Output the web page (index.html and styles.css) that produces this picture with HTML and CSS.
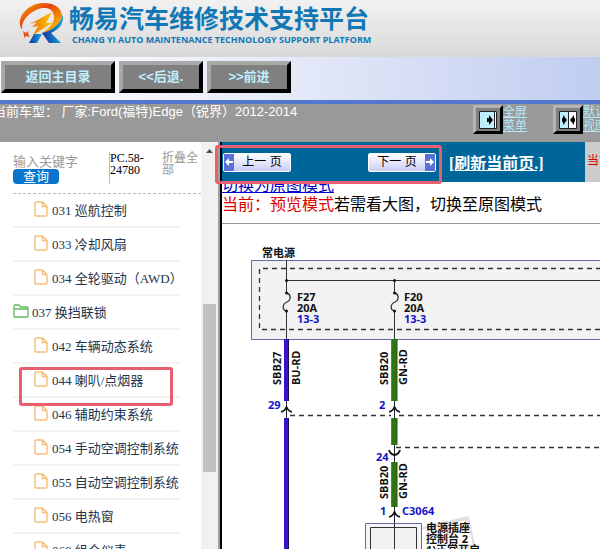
FILE: index.html
```html
<!DOCTYPE html>
<html lang="zh">
<head>
  <meta charset="UTF-8" />
  <title>畅易汽车维修技术支持平台</title>
  <meta name="viewport" content="width=device-width, initial-scale=1" />
  <link rel="stylesheet" href="styles.css">
</head>

<body>
  <header class="banner">
    <svg class="logo" viewBox="0 0 46 42" width="46" height="42" aria-hidden="true">
      <defs>
        <linearGradient id="fire" x1="0" y1="0" x2="1" y2="1">
          <stop offset="0" stop-color="#f9b800" />
          <stop offset="0.4" stop-color="#e8400c" />
          <stop offset="0.75" stop-color="#f7a000" />
          <stop offset="1" stop-color="#ffd800" />
        </linearGradient>
        <linearGradient id="bolt" x1="0" y1="0" x2="1" y2="0">
          <stop offset="0" stop-color="#f07010" />
          <stop offset="1" stop-color="#ffc400" />
        </linearGradient>
        <linearGradient id="sea" x1="0" y1="0" x2="1" y2="0">
          <stop offset="0" stop-color="#12349b" />
          <stop offset="1" stop-color="#1ba4e6" />
        </linearGradient>
      </defs>
      <path d="M4 28C-3 17 8 3 23 1C38 0 46 8 44 18C42 25 36 29 29 31L24 31C32 26 37 20 36 14C35 6 27 4 18 8C8 13 3 21 4 28Z" fill="url(#fire)" />
      <path d="M45 13C46 23 40 28 33 31L43 41L31 41L24 31C33 29 42 23 45 13Z" fill="url(#sea)" />
      <path d="M16 32L24 32L19 41L11 41Z" fill="url(#sea)" />
      <path d="M12 22L34 10L28 21L34 21L15 33L20 24L14 25L19 20Z" fill="url(#bolt)" />
      <path d="M5 29L8 31L11 29L10 32L12 35L8 34L6 36L6 33Z" fill="#e8501a" />
    </svg>
    <div class="brand">
      <h1 class="brand-name">畅易汽车维修技术支持平台</h1>
      <p class="brand-en">CHANG YI AUTO MAINTENANCE TECHNOLOGY SUPPORT PLATFORM</p>
    </div>
  </header>

  <nav class="toolbar">
    <button class="nav-btn wide">返回主目录</button>
    <button class="nav-btn">&lt;&lt;后退.</button>
    <button class="nav-btn">&gt;&gt;前进</button>
  </nav>

  <div class="infobar">
    <p class="car">当前车型： 厂家:Ford(福特)Edge（锐界）2012-2014</p>
    <div class="view-tools">
      <div class="view-tool">
        <button class="view-btn" aria-label="全屏菜单">
          <svg viewBox="0 0 18 18" width="18" height="18">
            <path d="M0.5 0.5H17.5V17.5H0.5Z" fill="#bfeeff" stroke="#222" />
            <path d="M15 1H17V17H15Z" fill="#fff" />
            <path d="M15.5 1V17" stroke="#222" />
            <path d="M8 7H10V4L14 9L10 14V11H8Z" fill="#000" />
          </svg>
        </button>
        <a class="view-link" href="#">全屏菜单</a>
      </div>
      <div class="view-tool">
        <button class="view-btn" aria-label="默认视图">
          <svg viewBox="0 0 18 18" width="18" height="18">
            <path d="M0.5 0.5H17.5V17.5H0.5Z" fill="#bfeeff" stroke="#222" />
            <path d="M9 1H17V17H9Z" fill="#fff" />
            <path d="M9.5 1V17" stroke="#222" />
            <path d="M3 7H4V4L8 9L4 14V11H3ZM16 7H15V4L11 9L15 14V11H16Z" fill="#000" />
          </svg>
        </button>
        <a class="view-link" href="#">默认视图</a>
      </div>
    </div>
  </div>

  <div class="frames">
    <aside class="sidebar">
      <div class="search">
        <div class="search-form">
          <input class="search-input" type="text" placeholder="输入关键字" aria-label="输入关键字" />
          <button class="search-btn">查询</button>
        </div>
        <div class="code">PC.58-24780</div>
        <a class="fold" href="#">折叠全部</a>
      </div>

      <svg class="symbols" width="0" height="0" aria-hidden="true">
        <symbol id="file" viewBox="0 0 14 16">
          <path d="M2 1H8.500L13 5.500V14Q13 15 12 15H2Q1 15 1 14V2Q1 1 2 1ZM8.500 1V5.500H13" fill="none" stroke="#f7bd7c" stroke-width="1.400" />
        </symbol>
        <symbol id="folder" viewBox="0 0 16 14">
          <path d="M1 12V2Q1 1 2 1H6L7.500 3H14Q15 3 15 4V12Q15 13 14 13H2Q1 13 1 12ZM1 5H15" fill="none" stroke="#62b95c" stroke-width="1.300" />
        </symbol>
      </svg>

      <ul class="tree">
        <li class="node"><svg class="file"><use href="#file" /></svg><a href="#">031 巡航控制</a></li>
        <li class="node"><svg class="file"><use href="#file" /></svg><a href="#">033 冷却风扇</a></li>
        <li class="node"><svg class="file"><use href="#file" /></svg><a href="#">034 全轮驱动（AWD）</a></li>
        <li class="node parent"><svg class="folder"><use href="#folder" /></svg><a href="#">037 换挡联锁</a></li>
        <li class="node"><svg class="file"><use href="#file" /></svg><a href="#">042 车辆动态系统</a></li>
        <li class="node"><svg class="file"><use href="#file" /></svg><a href="#">044 喇叭/点烟器</a><span class="mark mark-node"></span></li>
        <li class="node"><svg class="file"><use href="#file" /></svg><a href="#">046 辅助约束系统</a></li>
        <li class="node"><svg class="file"><use href="#file" /></svg><a href="#">054 手动空调控制系统</a></li>
        <li class="node"><svg class="file"><use href="#file" /></svg><a href="#">055 自动空调控制系统</a></li>
        <li class="node"><svg class="file"><use href="#file" /></svg><a href="#">056 电热窗</a></li>
        <li class="node"><svg class="file"><use href="#file" /></svg><a href="#">060 组合仪表</a></li>
      </ul>
    </aside>

    <div class="scrollbar">
      <svg class="scroll-up" viewBox="0 0 7 4" width="7" height="4"><path d="M3.500 0L7 4H0Z" fill="#505050" /></svg>
      <div class="scroll-thumb"></div>
    </div>

    <main class="content">
      <div class="pager">
        <div class="pager-main">
          <div class="pager-btns">
            <button class="page-btn"><span class="arrow"><svg viewBox="0 0 8 8" width="8" height="8"><path d="M0 4L4 0V3H8V5H4V8Z" fill="#fff" /></svg></span><span class="page-text">上一 页</span></button>
            <button class="page-btn"><span class="page-text">下一 页</span><span class="arrow"><svg viewBox="0 0 8 8" width="8" height="8"><path d="M8 4L4 0V3H0V5H4V8Z" fill="#fff" /></svg></span></button>
            <span class="mark mark-pager"></span>
          </div>
          <a class="refresh" href="#">[刷新当前页.]</a>
        </div>
        <div class="pager-side">当前</div>
      </div>

      <div class="mode">
        <a class="mode-link" href="#">切换为原图模式</a>
        <p class="mode-text"><span class="red">当前：预览模式</span>若需看大图，切换至原图模式</p>
      </div>

      <!-- 电路图 -->
      <svg class="diagram" viewBox="222 224 378 325" preserveAspectRatio="xMinYMin slice">
        <g fill="none" stroke="#dedede" stroke-width="2">
          <path d="M416 530L468 517L474 545L423 558Z" />
          <path d="M446 524L466 519L468 529L449 534Z" />
        </g>

        <path d="M610 260.500H251.500V339.500H610" fill="#f2f2f2" stroke="#6868ad" />
        <path d="M610 268.500H259.500V329.500H610" fill="none" stroke="#333" stroke-width="1.300" stroke-dasharray="5 4" />

        <g fill="none" stroke="#333">
          <path d="M286.500 260V293M286.500 311V339M394.500 280V293M394.500 311V339M286 280.500H610" />
          <path d="M286.500 293C291 294 291.500 300 287 302C282 304 282 310 286.500 311M394.500 293C399 294 399.500 300 395 302C390 304 390 310 394.500 311" stroke-width="1.300" />
          <path d="M290 415.500H391M399 415.500H610M396 447.500H610" stroke-dasharray="5 4" stroke-width="1.300" />
        </g>
        <g fill="#111">
          <circle cx="286.500" cy="280.500" r="1.500" /><circle cx="394.500" cy="280.500" r="1.500" />
          <circle cx="286.500" cy="293" r="1.500" /><circle cx="394.500" cy="293" r="1.500" />
          <circle cx="286.500" cy="311" r="1.500" /><circle cx="394.500" cy="311" r="1.500" />
        </g>

        <!-- 导线 -->
        <path d="M286.500 400V420M394.500 400V420M394.500 443V463M394.500 505V524" stroke="#223" />
        <path d="M284 339H289V401H284ZM284 418H289V570H284Z" fill="#3a12cc" />
        <path d="M288.500 339V401M288.500 418V570" stroke="#15104a" />
        <path d="M392 339H397V401H392ZM392 418H397V445H392ZM392 462H397V507H392Z" fill="#2f7412" />
        <path d="M391.500 339V401M391.500 418V445M391.500 462V507" stroke="#8a6a4a" />
        <path d="M397 339V401M397 418V445M397 462V507" stroke="#24520e" />
        <g fill="none" stroke="#111" stroke-width="1.800">
          <path d="M281 412Q285 411 286.500 407Q288 411 292 412" />
          <path d="M389 412Q393 411 394.500 407Q396 411 400 412" />
          <path d="M389 450Q390 454 394.500 455Q399 454 400 450" />
          <path d="M389 517Q393 516 394.500 512Q396 516 400 517" />
        </g>

        <path d="M365.500 523.500H421.500V570H365.500Z" fill="#f4f4fa" stroke="#6868ad" />
        <path d="M370.500 527.500H416.500V570H370.500Z" fill="#f2f2f2" stroke="#333" />
        <path d="M394.500 523V570" stroke="#333" />

        <g class="label">
          <text x="262" y="257">常电源</text>
          <text x="297" y="301">F27</text><text x="297" y="312">20A</text>
          <text x="404" y="301">F20</text><text x="404" y="312">20A</text>
          <text transform="translate(281 385) rotate(-90)">SBB27</text>
          <text transform="translate(300 385) rotate(-90)">BU-RD</text>
          <text transform="translate(388 385) rotate(-90)">SBB20</text>
          <text transform="translate(407 385) rotate(-90)">GN-RD</text>
          <text transform="translate(388 499) rotate(-90)">SBB20</text>
          <text transform="translate(407 499) rotate(-90)">GN-RD</text>
          <text x="426" y="532">电源插座</text>
          <text x="426" y="543">控制台 2</text>
          <text x="426" y="554">1)正常开启</text>
        </g>
        <g class="label pin">
          <text x="297" y="323">13-3</text><text x="404" y="323">13-3</text>
          <text x="268" y="409">29</text><text x="379" y="409">2</text>
          <text x="376" y="461">24</text><text x="380" y="515">1</text>
          <text x="402" y="515">C3064</text>
        </g>
      </svg>
    </main>
  </div>
</body>
</html>
```

FILE: styles.css
```css
* { box-sizing: border-box; }
body {
  margin: 0;
  height: 100vh;
  overflow: hidden;
  display: flex;
  flex-direction: column;
  background: #fff;
  font-family: "Liberation Sans", "Noto Sans CJK SC", sans-serif;
  font-size: 13px;
}
h1, p, ul { margin: 0; padding: 0; }
button { margin: 0; padding: 0; font-family: inherit; cursor: pointer; }

/* 顶部 */
.banner {
  display: flex;
  flex: none;
  gap: 5px;
  height: 57px;
  padding: 2px 0 0 18px;
  background: linear-gradient(#f1f1f1, #d9d9d9);
}
.brand { white-space: nowrap; color: #1278b5; }
.brand-name { font-size: 25px; line-height: 34px; font-weight: bold; }
.brand-en { padding-left: 3px; font-family: "Open Sans", sans-serif; font-size: 9px; line-height: 8px; font-weight: bold; }

.toolbar {
  display: flex;
  flex: none;
  gap: 4px;
  height: 47px;
  padding: 4px 1px;
  border-bottom: 4px solid #5277cd;
  background: linear-gradient(90deg, #fff, #e4e9f8 50%, #c0cdf0);
}
.nav-btn {
  width: 84px;
  height: 32px;
  border: 4px solid;
  border-color: #a8a8a8 #000 #000 #a8a8a8;
  background: #808080;
  color: #bfefff;
  font-size: 13px;
  line-height: 20px;
  font-weight: bold;
}
.nav-btn.wide { width: 114px; }

.infobar {
  display: flex;
  flex: none;
  justify-content: space-between;
  height: 38px;
  background: #999;
  color: #fff;
  overflow: hidden;
}
.car { margin-left: -7px; line-height: 16px; white-space: pre; }
.view-tools { display: flex; gap: 26px; padding-top: 1px; margin-right: -7px; }
.view-tool { display: flex; }
.view-btn {
  display: flex;
  align-items: center;
  justify-content: center;
  width: 30px;
  height: 29px;
  border: 3px solid;
  border-color: #b4b4b4 #000 #000 #b4b4b4;
  background: #808080;
}
.view-link { width: 24px; font-size: 12px; line-height: 14px; color: #b4e8f8; }

/* 左侧目录 */
.frames { display: flex; flex: 1; min-height: 0; }
.sidebar { flex: none; width: 201px; padding-left: 13px; overflow: hidden; font-family: "Liberation Serif", "Noto Sans CJK SC", serif; }
.search {
  display: flex;
  height: 52px;
  padding-top: 10px;
  border-bottom: 1px dashed #bbb;
}
.search-form { width: 96px; padding-top: 2px; }
.search-input {
  display: block;
  width: 90px;
  height: 15px;
  padding: 0;
  border: 0;
  background: none;
  font: 13px/15px "Liberation Serif", "Noto Sans CJK SC", serif;
}
.search-input::placeholder { color: #999; }
.search-btn {
  display: block;
  width: 46px;
  height: 15px;
  border: 0;
  border-radius: 4px;
  background: #0874cc;
  color: #fff;
  font-size: 13px;
  line-height: 15px;
}
.code { width: 53px; height: 32px; padding-right: 8px; border-left: 1px solid #bbb; font-size: 12px; line-height: 12px; }
.fold { width: 36px; font-size: 12px; line-height: 12px; color: #999; text-decoration: none; }
.symbols { position: absolute; }
.tree { list-style: none; margin-right: 20px; }
.node {
  position: relative;
  display: flex;
  align-items: center;
  gap: 4px;
  height: 34px;
  padding: 0 0 2px 21px;
  border-bottom: 2px solid #f3f3f3;
  white-space: nowrap;
}
.node.parent { padding-left: 0; gap: 3px; }
.node a { color: #22344d; text-decoration: none; }
.file { width: 14px; height: 16px; flex: none; }
.folder { width: 16px; height: 14px; flex: none; }

.scrollbar { flex: none; width: 17px; padding: 7px 2px 0; background: #f1f1f1; }
.scroll-up { display: block; margin: 0 auto 151px; }
.scroll-thumb { height: 168px; background: #c1c1c1; }

/* 右侧内容 */
.content { flex: 1; min-width: 0; border-left: 2px solid #000; box-shadow: -2px 0 #a0a0a0; margin-left: 2px; }
.pager { display: flex; height: 40px; }
.pager-main {
  display: flex;
  align-items: center;
  flex: 1;
  gap: 13px;
  background: #069;
}
.pager-btns { position: relative; display: flex; gap: 77px; padding-left: 1px; }
.page-btn {
  display: flex;
  align-items: stretch;
  width: 68px;
  height: 19px;
  border: 1px solid #fff;
  border-radius: 2px;
  background: linear-gradient(#fff, #c9cdf6);
  font-size: 12px;
  line-height: 16px;
  color: #000;
}
.page-text { flex: 1; white-space: nowrap; }
.arrow { display: flex; align-items: center; justify-content: center; width: 10px; background: #5a70d8; }
.refresh { font-family: "Liberation Serif", "Noto Sans CJK SC", serif; font-size: 16px; font-weight: bold; color: #fff; white-space: nowrap; }
.pager-side { width: 15px; padding-left: 2px; overflow: hidden; background: #ccc; color: #d00; font-size: 12px; line-height: 38px; white-space: nowrap; }

.mode { height: 42px; overflow: hidden; border-bottom: 1px solid #999; font-size: 16px; white-space: nowrap; }
.mode-link { display: block; margin-top: -5px; line-height: 18px; color: #00c; }
.mode-text { line-height: 20px; }
.red { color: #d00; }

.diagram { display: block; width: 100%; }
.label { font: bold 11px "Noto Sans", "Noto Sans CJK SC", sans-serif; fill: #111; }
.pin { fill: #1515c8; }

/* 红框标注 */
.mark { position: absolute; border: 3px solid #ea5f70; border-radius: 3px; pointer-events: none; }
.mark-node { left: 6px; right: 8px; top: 3px; height: 39px; z-index: 1; }
.mark-pager { left: -7px; right: -6px; top: -8px; height: 39px; }
```
